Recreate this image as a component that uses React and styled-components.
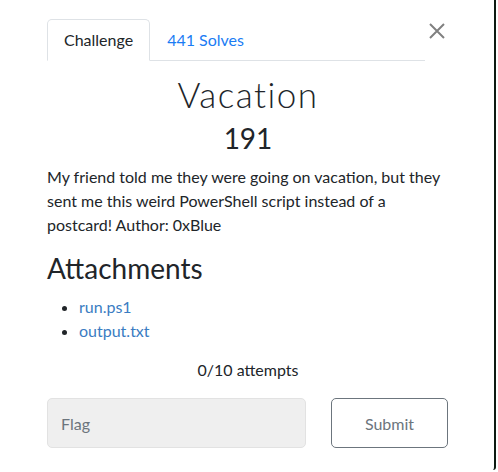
import React from 'react';
import styled, { createGlobalStyle } from 'styled-components';

const GlobalStyle = createGlobalStyle`
  html, body {
    margin: 0;
    padding: 0;
    background: #ffffff;
  }
  body {
    font-family: Lato, "Open Sans", sans-serif;
    color: #212529;
  }
`;

const Modal = styled.div`
  width: 496px;
  height: 470px;
  box-sizing: border-box;
  border-right: 2px solid #0d1a12;
  border-bottom-right-radius: 3px;
  background: #ffffff;
  padding: 19px 0 0 47px;
`;

const Body = styled.div`
  width: 402px;
  display: flex;
  flex-direction: column;
`;

const TopRow = styled.div`
  display: flex;
  align-items: flex-start;
`;

const Tabs = styled.nav`
  width: 378px;
  display: flex;
  border-bottom: 1px solid #dee2e6;
`;

const Tab = styled.a`
  display: block;
  padding: 8px 16px;
  margin-bottom: -1px;
  font-size: 16px;
  line-height: 24px;
  text-decoration: none;
  border: 1px solid ${(p) => (p.$active ? '#dee2e6' : 'transparent')};
  border-bottom-color: ${(p) => (p.$active ? '#ffffff' : 'transparent')};
  border-top-left-radius: 5px;
  border-top-right-radius: 5px;
  background: ${(p) => (p.$active ? '#ffffff' : 'transparent')};
  color: ${(p) => (p.$active ? '#212529' : '#1a7cf4')};
`;

const Close = styled.button`
  margin: 4px 0 0 4px;
  padding: 0;
  border: 0;
  background: none;
  width: 16px;
  height: 16px;
  display: flex;
  cursor: pointer;
`;

const Title = styled.h2`
  margin: 12px 0 0;
  font-size: 35px;
  font-weight: 300;
  line-height: 1.2;
  letter-spacing: 1.5px;
  text-align: center;
`;

const Points = styled.h3`
  margin: 7px 0 0;
  font-size: 28px;
  font-weight: 400;
  line-height: 1.2;
  text-align: center;
`;

const Description = styled.p`
  margin: 9px 0 0;
  font-size: 16px;
  line-height: 24px;
`;

const SectionTitle = styled.h3`
  margin: 15px 0 0;
  font-size: 28px;
  font-weight: 400;
  line-height: 1.2;
`;

const FileList = styled.ul`
  margin: 10px 0 0;
  padding-left: 32px;
  font-size: 16px;
  line-height: 24px;
`;

const FileLink = styled.a`
  color: #3a7cc2;
  text-decoration: none;
`;

const Attempts = styled.p`
  margin: 15px 0 0;
  font-size: 16px;
  line-height: 24px;
  text-align: center;
`;

const SubmitRow = styled.div`
  margin-top: 16px;
  display: grid;
  grid-template-columns: 259px 117px;
  column-gap: 25px;
`;

const FlagInput = styled.input`
  box-sizing: border-box;
  height: 50px;
  padding: 0 13px;
  border: 1px solid #e2e2e2;
  border-radius: 5px;
  background: #efefef;
  font-family: inherit;
  font-size: 16px;
  color: #495057;
  outline: none;

  &::placeholder {
    color: #6c757d;
  }
`;

const SubmitButton = styled.button`
  height: 50px;
  border: 1px solid #6c757d;
  border-radius: 5px;
  background: #ffffff;
  font-family: inherit;
  font-size: 16px;
  color: #6c757d;
`;

export default function App() {
  return (
    <>
      <GlobalStyle />
      <Modal>
        <Body>
          <TopRow>
            <Tabs>
              <Tab $active>Challenge</Tab>
              <Tab>441 Solves</Tab>
            </Tabs>
            <Close aria-label="Close">
              <svg width="16" height="16" viewBox="0 0 16 16">
                <path d="M1 1L15 15M15 1L1 15" stroke="#808080" strokeWidth="2" />
              </svg>
            </Close>
          </TopRow>
          <Title>Vacation</Title>
          <Points>191</Points>
          <Description>
            My friend told me they were going on vacation, but they sent me this weird
            PowerShell script instead of a postcard! Author: 0xBlue
          </Description>
          <SectionTitle>Attachments</SectionTitle>
          <FileList>
            <li><FileLink>run.ps1</FileLink></li>
            <li><FileLink>output.txt</FileLink></li>
          </FileList>
          <Attempts>0/10 attempts</Attempts>
          <SubmitRow>
            <FlagInput placeholder="Flag" />
            <SubmitButton>Submit</SubmitButton>
          </SubmitRow>
        </Body>
      </Modal>
    </>
  );
}
